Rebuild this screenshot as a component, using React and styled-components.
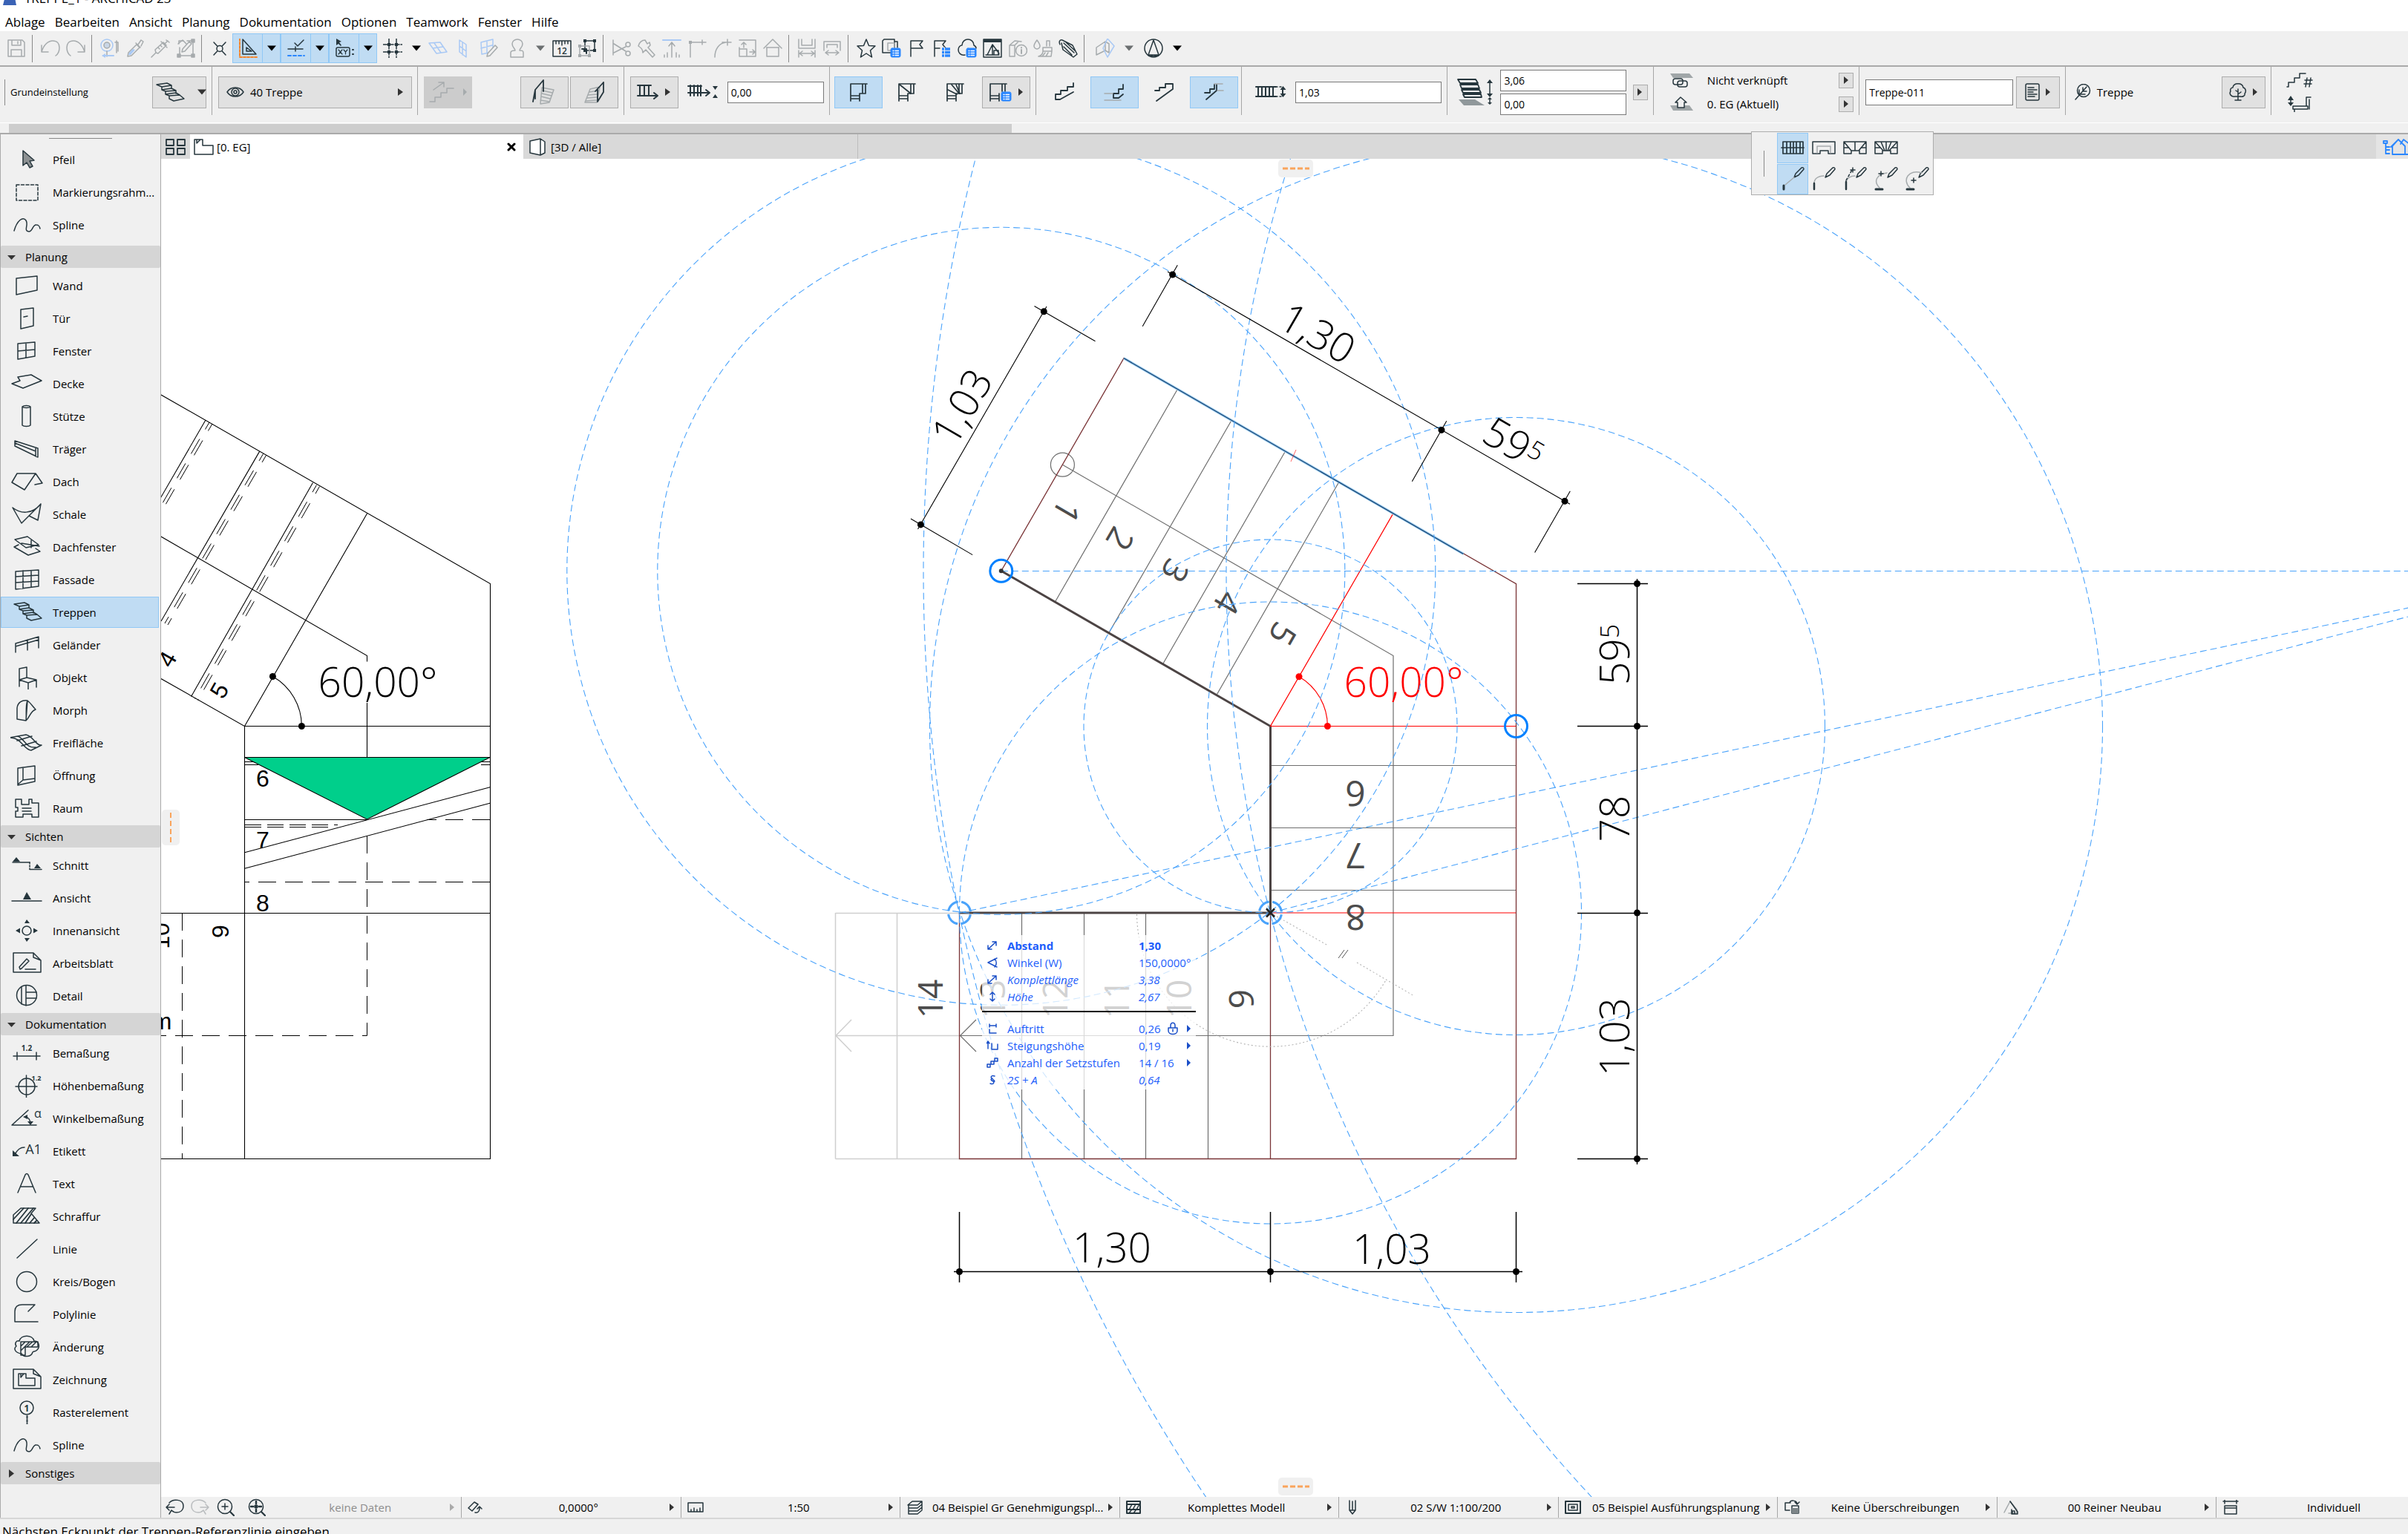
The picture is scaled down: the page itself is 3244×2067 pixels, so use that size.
import React from "react";
import styled, { createGlobalStyle, css } from "styled-components";

const ink = "#26363d";
const mute = "#a6abad";
const blue = "#2b87ff";
const pale = "#a9c9f5";
const guide = "#4aa3fb";

const Global = createGlobalStyle`
  * { box-sizing: border-box; }
  body { margin: 0; background: #f0f0f0; color: #000; font-family: "Open Sans", "Noto Sans", sans-serif; font-size: 15px; overflow: hidden; }
  button, input { font: inherit; color: inherit; }
  button { border: 0; background: none; padding: 0; }
  svg { display: block; flex: none; }
`;

/* ---------- icons ---------- */

const P = ({ d, c, f = "none", w }) => <path d={d} stroke={c} fill={f} strokeWidth={w} />;
const S = ({ d, c = "currentColor" }) => <path d={d} fill={c} stroke="none" />;

const Svg = ({ w = 26, h = 26, children, color = ink, line = 1.5 }) => (
  <svg width={w} height={h} viewBox={`0 0 ${w} ${h}`} color={color} stroke={color} fill="none"
    strokeWidth={line} strokeLinecap="round" strokeLinejoin="round" aria-hidden="true">
    {children}
  </svg>
);

const Down = ({ c = "#000" }) => <Svg w={12} h={8} color={c}><S d="M0 0.500h12l-6 7z" c={c} /></Svg>;
const Right = ({ c = "#333", s = 8 }) => <Svg w={s} h={12} color={c}><S d={`M0 1l${s - 1} 5l${1 - s} 5z`} c={c} /></Svg>;
const ListBadge = ({ x, y }) => (
  <g transform={`translate(${x} ${y})`}>
    <rect width="13" height="12" rx="2" fill={blue} stroke={blue} strokeWidth="1" />
    <path d="M3 3.500h1M6 3.500h4.500M3 6.500h1M6 6.500h4.500M3 9.500h1M6 9.500h4.500" stroke="#fff" strokeWidth="1.300" />
  </g>
);

const tool = {
  save: <Svg color={mute}><P d="M2 2h19l3 3v19H2zM7 2v7h12V2M6 24v-9h14v9M15 4v3" /></Svg>,
  undo: <Svg color={mute}><P d="M1 9v9h9M1 18C4 8 10 3 16 3c6 0 9 4 9 9s-2 9-5 11" /></Svg>,
  redo: <Svg color={mute}><P d="M25 9v9h-9M25 18C22 8 16 3 10 3c-6 0-9 4-9 9s2 9 5 11" /></Svg>,
  find: <Svg color={mute}><circle cx="9" cy="9" r="8" stroke={pale} /><circle cx="9" cy="9" r="4" fill="#c9d6e6" /><P d="M9 17v7M20 5h4v12M22 3v16" /><P d="M4 23h14" c={pale} w={2} /><S d="M2 23l5-3v6z" c={pale} /></Svg>,
  pick: <Svg color={mute}><P d="M3 24l1-5L15 8l4 4L8 23zM14 6l6 6M17 8l4-6 3 2-3 6" /><S d="M5 19l5-5 3 1-6 7H4z" c={pale} /></Svg>,
  inject: <Svg color={mute}><P d="M1 25l6-6M7 19l-1-4L17 5l4 4L10 20zM14 4l8 8M19 7l4-4M21 2l4 3M10 12l2 2M13 9l2 2" /></Svg>,
  edit: <Svg color={mute}><P d="M4 7V3h6M15 3h8v20H5V12M9 14L18 4l3 3-9 10-4 1z" /><P d="M3 7l6-5 5 5" /><rect x="21" y="1" width="4" height="4" fill={mute} /><rect x="21" y="21" width="4" height="4" fill={mute} /><rect x="2" y="21" width="4" height="4" fill={mute} /></Svg>,
  cross: <Svg><P d="M5 5l16 17M21 5L5 22" /><circle cx="13" cy="13.500" r="4" fill="#f0f0f0" /></Svg>,
  square: <Svg><P d="M6 1v20h18zM11 12v5h7z" /><path d="M2 0v25h24" stroke="#f5842a" strokeWidth="2" strokeDasharray="3 2" /></Svg>,
  snap: <Svg><P d="M2 14h20M12 11v6M11 6l4 4 8-8" /><path d="M2 23h22" stroke={blue} strokeWidth="2" strokeDasharray="4 3" /></Svg>,
  coord: <Svg><S d="M2 0v9l3-2 3 3 1-1-3-4 3-1z" /><rect x="2" y="12" width="18" height="12" rx="2" /><P d="M5 15l5 6M10 15l-5 6M12 15l2.500 3L17 15M14.500 18v3" w={1.200} /><P d="M24 15h1M24 21h1" w={2} /></Svg>,
  grid: <Svg><path d="M0 8h26M0 18h26M8 0v26M18 0v26" strokeDasharray="6 2" /><S d="M6 6h4v4H6zM16 6h4v4h-4zM6 16h4v4H6zM16 16h4v4h-4z" /></Svg>,
  plane: <Svg color={pale}><P d="M1 6l15-1 9 13-14 2zM6 13l14-2M8 6l9 13M15 5" /></Svg>,
  wallp: <Svg color={pale}><P d="M8 2l9 6v17l-9-7zM8 10l9 7M12 5v17" /></Svg>,
  planeEdit: <Svg color={pale}><P d="M3 5l16-4v17L4 21zM3 13l15-4M11 3v17" /><P d="M11 24l1-4 10-11 3 3-10 11z" c={mute} f="#f0f0f0" /></Svg>,
  stamp: <Svg color={mute}><P d="M5 25h17v-6c0-3-2-3-5-3 0-3 4-4 4-9a7 6 0 0 0-14 0c0 5 4 6 4 9-3 0-6 0-6 3z" /></Svg>,
  ruler: <Svg><P d="M1 3h24v21H1zM5 3v4M9 3v4M13 3v6M17 3v4M21 3v4" /><text x="13" y="21" fontSize="12" fontWeight="600" textAnchor="middle" fill={ink} stroke="none">12</text></Svg>,
  group: <Svg><P d="M10 3h13v13H10z" /><P d="M3 10h13v13H3z" c={mute} /><S d="M8 1h4v4H8zM21 1h4v4h-4zM8 14h4v4H8zM21 14h4v4h-4z" /><P d="M6 14h6v6" w={2} /><S d="M1 8h4v4H1zM1 21h4v4H1zM14 21h4v4h-4z" c={mute} /></Svg>,
  scissors: <Svg color={mute}><P d="M2 2v20M3 7l16 10M3 19l16-8" /><circle cx="22" cy="8" r="3" /><circle cx="22" cy="20" r="3" /></Svg>,
  axe: <Svg color={mute}><P d="M2 10c1-5 5-8 9-8l3 5 3-2 1 4-3 3 9 10-3 3-9-10-4 4c0-5-3-7-6-9z" /></Svg>,
  raise: <Svg color={mute}><P d="M1 2h24" c={pale} w={2} /><P d="M13 25V5M9 10l4-5 4 5M7 25v-6M3 25v-3M19 25v-6M23 25v-3" /></Svg>,
  corner: <Svg color={mute}><P d="M4 25V5h14M18 5h7M20 2v6" /><S d="M2 3h4v4H2z" c={mute} /></Svg>,
  fillet: <Svg color={mute}><P d="M3 25C3 14 9 6 18 5M13 5h12M20 1v8" /></Svg>,
  resize: <Svg color={mute}><P d="M2 2h22v22H13M2 24V12M2 24h10V14H2M8 12V6M5 8l3-3 3 3M16 18h6M20 15l3 3-3 3" /></Svg>,
  house: <Svg color={mute}><P d="M1 13L13 1l12 12M5 12v12h16V12" /><P d="M5 12h16" /></Svg>,
  gapW: <Svg color={mute}><P d="M2 1v12h22V1M6 1v8h14V1M2 16v9M24 16v9M4 20h18M7 17l-4 3 4 3M19 17l4 3-4 3" /></Svg>,
  gapD: <Svg color={mute}><P d="M2 12V4h22v8M6 12V8h14v4M4 19h18M8 16l-4 3 4 3M18 16l4 3-4 3M2 12v4M24 12v4" /></Svg>,
  star: <Svg><P d="M13 1l3.500 8.500 8.500.500-6.500 6 2 9L13 20l-7.500 5 2-9L1 10l8.500-.500z" /></Svg>,
  copyl: <Svg><P d="M3 1h14v18H1V3zM17 4h4v8" /><P d="M8 6h9v10H8z" c={mute} /><ListBadge x={12} y={13} /></Svg>,
  flag: <Svg><P d="M5 24V3h16l-4 5 4 5H5" /></Svg>,
  flagl: <Svg><P d="M3 24V3h15l-4 5 4 5M3 13h7" /><path d="M13 14h11M13 18.500h11M13 23h11" stroke={blue} strokeWidth="3.500" strokeLinecap="butt" /><path d="M16.500 12v13" stroke="#f0f0f0" strokeWidth="1" /></Svg>,
  cloud: <Svg><P d="M10 22c-6 1-9-3-9-7s3-6 5-6c0-5 4-8 8-8s8 3 8 8c2 1 3 2 3 4" /><ListBadge x={12} y={13} /></Svg>,
  view: <Svg><P d="M1 1h24v24H1z" /><S d="M1 1h24v4H1z" /><P d="M6 22L13 8l9 12M13 8v14M15 22v-6h6v6M4 22h18" /></Svg>,
  info: <Svg color={mute}><P d="M9 24H2V9l7-6 9 1M2 9h7v15M9 9l5-5" /><circle cx="18" cy="16" r="7.500" fill="#f0f0f0" /><P d="M18 12v.500M18 15v5" w={2} /></Svg>,
  brush: <Svg color={mute}><P d="M5 2c3 4 4 6 4 8s-2 4-4 4-4-2-4-4 1-4 4-8zM18 10V3h4v7M13 12h12v5H13zM13 17c0 4-3 6-6 7h17l1-7M12 24l4-5M17 24l3-5" /></Svg>,
  clip: <Svg><P d="M2 8c-2-4 0-7 3-6l14 7 6 12-5 4L6 15 4 6M7 6l14 13M10 5l13 12M7 11l11 11" /></Svg>,
  cube: <Svg color={mute}><P d="M1 12l12-8v12L1 22zM13 4l5 3v12l-5-3" /><P d="M16 0l9 10-9 15-6-12z" c={pale} /></Svg>,
  compass: <Svg><ellipse cx="13" cy="13" rx="12" ry="12" /><P d="M13 2L6 22h14zM6 22c4 2 10 2 14 0" /></Svg>,
};

const pal = {
  pfeil: <><path d="M17 4l15 13-6 1 4 7-4 2-4-7-5 4z" fill="#8d9193" /></>,
  rahmen: <rect x="8" y="6" width="29" height="21" strokeDasharray="4 2.500" />,
  spline: <P d="M5 24C9 10 17 4 21 10s-4 14 4 15c5 0 5-10 10-9 3 0 4 1 5 5" />,
  wand: <P d="M8 6l28-3v19L8 28zM8 6v22" />,
  tuer: <P d="M14 4l17-2v24l-17 4zM18 14l5-1" />,
  fenster: <P d="M10 6l23-2v19L10 27zM21 5v20M10 16l23-2" />,
  decke: <P d="M10 7l18-3 14 8-25 10-15-6 11-4z" />,
  stuetze: <P d="M16 3v25c2 2 9 2 11 0V3M16 3c2-2 9-2 11 0-2 2-9 2-11 0" />,
  traeger: <P d="M6 5l31 10v12L6 12zM6 8l28 11M34 14v12" />,
  dach: <P d="M9 5h25l9 13-10 2M9 5L2 17l17 10L34 5M34 5l-15 22" />,
  schale: <P d="M3 7c10 8 26 10 38-5l-4 22-12-6M3 7l12 21L41 2" />,
  dachf: <P d="M6 6l17-4 15 11-17 4zM11 13l-6 3 19 11 16-5-6-4M15 11l24 4M28 7v10" />,
  fassade: <P d="M7 5l31-2v22L7 29zM17 4v24M28 4v22M7 12l31-2M7 20l31-2" />,
  treppen: <P d="M5 5l14-2 6 3-13 2zM12 8v4l5 2M12 8l13-2v4M17 14l-5-2 13-2 6 3zM17 14v4l5 2M31 13v4M22 20l-5-2 14-2 5 3zM22 20v4l6 3 14-3-6-5" />,
  gelaender: <P d="M7 14l31-9v9M7 14v12M7 18l31-9M23 9v14M38 14v6" />,
  objekt: <P d="M12 4l10-2v14l-10 3zM12 19l12 4 11-4-13-3M12 19v9M24 23v9M35 19v10" />,
  morph: <P d="M9 28V13C10 5 16 2 23 3l-2 27zM23 3c4 3 8 9 11 12-7 2-8 11-13 15M23 3c-3 6-1 20-2 27" />,
  frei: <P d="M-1 9l22-4c9 1 13 15 21 14l-14 7C18 26 15 8-1 9zM10 7c9 3 10 16 24 15M9 13l20-6M15 20l20-6" />,
  oeffnung: <P d="M10 6l23-3v21l-23 5zM17 5v17M10 28l7-6 16-2" />,
  raum: <P d="M7 4h8v7h10V4h4v5h9v19h-9v-4H17v4H7v-8h3v-5H7zM16 16h12M16 20h12" />,
  schnitt: <><P d="M3 12h23M26 21.500h16" /><path d="M26 12v9" strokeDasharray="2 2" /><S d="M3 11l5-6 5 6zM32 20l4-6 5 6z" /></>,
  ansicht: <><P d="M2 20h40" /><S d="M17 18l5-10 6 10z" /></>,
  innen: <><circle cx="22" cy="16" r="6" /><S d="M19 6l3-5 4 5zM19 26l3 5 4-5zM13 12.500v7l-6-3.500zM31 12.500v7l6-3.500z" /></>,
  blatt: <P d="M6 2h25l10 10v16H4V2zM31 2v6l10 4M13 24l-1-3 10-11 3 3-10 10zM20 24h14" />,
  detail: <><circle cx="22" cy="15" r="13.500" /><P d="M15 4v23M21 2v27M35 11H21M35 19H21" /></>,
  bemass: <><P d="M4 20h36M9 15v10M35 15v10" /><text x="22" y="13" fontSize="10" fontWeight="700" textAnchor="middle" fill={ink} stroke="none">1.2</text></>,
  hoehen: <><circle cx="22" cy="17" r="11" /><P d="M7 17h29M21.500 2v30" /><text x="35" y="9" fontSize="9" fontWeight="700" textAnchor="middle" fill={ink} stroke="none">1.2</text></>,
  winkel: <><P d="M2 25h33M2 25L24 5M20 14c4 0 7 4 7 9" /><S d="M17 14l6-3v6zM23 20h8l-4 5z" /><text x="37" y="15" fontSize="16" textAnchor="middle" fill={ink} stroke="none">α</text></>,
  etikett: <><P d="M6 20c4-6 7-9 13-9" /><S d="M3 15l9 8H3z" /><text x="31" y="20" fontSize="18" textAnchor="middle" fill={ink} stroke="none">A1</text></>,
  text: <P d="M10 28L20 4q2-3 4 0l10 24M14 20h16" />,
  schraff: <><P d="M4 14L14 5h20l-6 7 11 13H4z" /><P d="M4 20L18 5M8 25L24 5M14 25L31 5M20 25l8-12M26 25l6-7M32 25l3-3" w={1.800} /></>,
  linie: <P d="M9 28L36 3" />,
  kreis: <circle cx="22" cy="16" r="13.500" />,
  poly: <P d="M37 26H6V12c0-6 4-9 10-9h17l-9 9" />,
  aender: <><P d="M12 8c2-9 18-9 20 0 7 0 8 8 4 12-3 3-5 1-6 3-2 7-12 7-15 2C6 24 4 18 8 15c-3-4 0-8 4-7z" /><P d="M14 9h23v7H20v11h-6zM14 15l6-6M14 21l12-12M22 16l8-7M28 16l7-7" /></>,
  zeich: <P d="M6 2h25l10 10v16H4V2zM31 2v6l10 4M11 8h10v6h12v10H11zM14 8v5l4-5" />,
  raster: <><circle cx="22" cy="10" r="9" /><path d="M22.500 21v11" strokeDasharray="3 2" strokeWidth="2" /><text x="22" y="14.500" fontSize="12" fontWeight="700" textAnchor="middle" fill={ink} stroke="none">1</text></>,
};

/* ---------- shell ---------- */

const Shell = styled.div`
  display: flex; flex-direction: column; height: 100vh; overflow: hidden;
`;
const TitleBar = styled.header`
  display: flex; gap: 11px; height: 30px; margin-top: -13px; padding-left: 4px; background: #fff; font-size: 17px; line-height: 22px;
`;
const MenuBar = styled.nav`
  display: flex; gap: 13px; height: 25px; padding-left: 7px; background: #fff; font-size: 17px; line-height: 24px;
`;
const Toolbar = styled.div`
  display: flex; align-items: center; height: 48px; padding-left: 5px; border-bottom: 2px solid #aaa;
`;
const ToolBtn = styled.button`
  display: flex; align-items: center; justify-content: center; width: 34px; height: 40px;
`;
const SplitBox = styled.div`
  display: grid; grid-template-columns: 1fr 24px; width: 65px; height: 40px; flex: none;
  ${(p) => p.$on && css`
    background: #c0dcf3; border: 1px solid #90c8f6;
    & > * + * { border-left: 1px solid #90c8f6; }
  `}
`;
const SplitBtn = styled.button`
  display: flex; align-items: center; justify-content: center;
`;
const ToolSep = styled.span`
  width: 1px; height: 37px; margin: 0 7px 0 4px; background: #8a8a8a; flex: none;
`;
const Split = ({ on, icon, muted, label }) => (
  <SplitBox $on={on}>
    <SplitBtn aria-label={label}>{icon}</SplitBtn>
    <SplitBtn aria-label={label + " Optionen"}><Down c={muted ? "#6b6f70" : "#000"} /></SplitBtn>
  </SplitBox>
);

/* ---------- info box ---------- */

const InfoBar = styled.div`
  display: grid; grid-template-columns: 285px repeat(10, 3fr) 2fr; height: 75px; padding-bottom: 10px;
`;
const Panel = styled.section`
  display: flex; align-items: center; gap: ${(p) => p.$gap ?? 2}px; padding: 3px 7px 0 ${(p) => p.$pl ?? 8}px; min-width: 0;
  font-size: 15px;
  & + & { border-left: 1px solid #a6a6a6; }
`;
const Box = styled.button`
  display: flex; align-items: center; justify-content: ${(p) => p.$justify ?? "center"}; gap: 8px; flex: ${(p) => (p.$grow ? 1 : "none")};
  width: ${(p) => p.$w ?? 65}px; height: 43px; padding: 0 ${(p) => (p.$grow ? 10 : 6)}px;
  background: #e1e1e1; border: 1px solid #adadad;
  ${(p) => p.$kind === "on" && css`background: #c0dcf3; border-color: #90c8f6;`}
  ${(p) => p.$kind === "off" && css`background: #ccc; border-color: #ccc;`}
  ${(p) => p.$kind === "plain" && css`background: none; border-color: transparent;`}
`;
const MiniBtn = styled.button`
  display: flex; align-items: center; justify-content: center; width: 20px; height: 21px; background: #e1e1e1; border: 1px solid #adadad; flex: none;
`;
const Grow = styled.span`flex: 1; text-align: left; white-space: nowrap;`;
const Field = styled.input`
  flex: 1; min-width: 0; height: ${(p) => p.$h ?? 29}px; padding: 0 4px; background: #fff; border: 1px solid #7a7a7a; border-radius: 0; font-size: 14px;
`;
const Stack = styled.div`
  display: flex; flex-direction: column; gap: 3px; flex: 1; min-width: 0;
  ${Field} { flex: none; width: 100%; }
`;
const Line = styled.div`
  display: flex; align-items: center; gap: 18px; height: 29px;
`;
const Grip = styled.span`width: 1px; height: 35px; background: #8a8a8a;`;
const BoxDivider = styled.span`width: 1px; height: 37px; background: #aaa;`;
const GroupLabel = styled.span`flex: 1; padding-left: 5px; font-size: 13px; white-space: nowrap;`;
const ScrollTrack = styled.div`
  height: 16px; padding: 1px 0 2px 12px; border-top: 1px solid #fff; border-bottom: 2px solid #aaa;
`;
const ScrollThumb = styled.div`width: 41.8%; height: 12px; background: #cdcdcd;`;

/* ---------- work area ---------- */

const Work = styled.main`
  display: grid; grid-template-columns: 217px 1fr; flex: 1; min-height: 0;
`;
const Palette = styled.aside`
  border-left: 1px solid #aaa; border-right: 1px solid #aaa; padding-top: 5px; min-height: 0; overflow: hidden;
`;
const PaletteGrip = styled.div`width: 85px; height: 1px; margin: 0 0 6px 65px; background: #888;`;
const PaletteHead = styled.button`
  display: flex; align-items: center; gap: 13px; width: 100%; height: 30px; padding-left: 9px; background: #d5d5d5; font-size: 15px; border-radius: 2px;
`;
const PaletteList = styled.ul`
  list-style: none; margin: 0; padding: ${(p) => (p.$first ? "0 0 6px" : "2px 0 1px")};
  li { padding: 1px 0; }
`;
const PaletteRow = styled.button`
  display: flex; align-items: center; gap: 13px; width: 213px; height: 42px; padding-left: 12px; border: 1px solid transparent;
  ${(p) => p.$on && css`background: #c0dcf3; border-color: #90c8f6;`}
`;
const Content = styled.div`display: flex; flex-direction: column; min-width: 0; min-height: 0;`;
const Tabs = styled.div`
  display: flex; height: 33px; background: #d9d9d9; flex: none;
`;
const Tab = styled.div`
  display: flex; align-items: center; width: 450px; padding: 0 10px 0 5px; background: ${(p) => (p.$on ? "#fff" : "#d9d9d9")}; border-right: 1px solid ${(p) => (p.$on ? "#d9d9d9" : "#bdbdbd")};
`;
const TabName = styled.button`
  display: flex; align-items: center; gap: 3px; flex: 1;
`;
const TabGrid = styled.button`display: flex; align-items: center; justify-content: center; width: 39px;`;
const TabEnd = styled.button`
  display: flex; align-items: center; width: 43px; margin-left: auto; padding-left: 9px; background: #e4e4e4; overflow: hidden;
`;
const Canvas = styled.div`
  position: relative; flex: 1; min-height: 0; background: #fff; overflow: hidden;
  & > svg { width: 100%; height: 100%; }
`;
const Ear = styled.div`
  position: absolute; display: flex; align-items: center; justify-content: center; background: #f0f0f0; border-radius: 5px;
  width: ${(p) => (p.$v ? 24 : 47)}px; height: ${(p) => (p.$v ? 48 : 24)}px;
  ${(p) => p.$side === "left" && css`left: 1px; top: 877px;`}
  ${(p) => p.$side === "top" && css`left: 1505px; top: 1px;`}
  ${(p) => p.$side === "bottom" && css`left: 1505px; bottom: 2px;`}
`;
const Tracker = styled.dl`
  position: absolute; left: 1106px; top: 1046px; width: 288px; height: 208px; margin: 0; padding: 2px 0;
  background: rgba(255, 255, 255, 0.75); color: #1c5dfb; font-size: 15px;
`;
const TrackRow = styled.div`
  display: grid; grid-template-columns: 28px 177px 38px 1fr 12px; align-items: center; height: 23px; padding-left: 6px;
  font-weight: ${(p) => (p.$bold ? 700 : 400)}; font-style: ${(p) => (p.$it ? "italic" : "normal")}; white-space: nowrap;
  dd { margin: 0; }
`;
const TrackRule = styled.hr`margin: 8px 0 10px; border: 0; height: 2px; background: #000;`;

const FloatBox = styled.div`
  position: absolute; z-index: 2; right: 639px; top: 177px; display: flex; align-items: center; gap: 17px; width: 246px; height: 86px; padding: 0 0 0 16px;
  background: #f0f0f0; border: 1px solid #adadad;
`;
const FloatGrid = styled.div`display: grid; grid-template-columns: repeat(5, 42px); grid-auto-rows: 41px; row-gap: 1px;`;
const FloatBtn = styled.button`
  display: flex; align-items: center; justify-content: center; border: 1px solid transparent;
  ${(p) => p.$on && css`background: #c0dcf3; border-color: #90c8f6;`}
`;

const StatusBar = styled.footer`
  display: grid; grid-template-columns: 109px repeat(9, minmax(0, 8fr)) minmax(0, 7fr); height: 28px; flex: none; font-size: 15px;
`;
const StatusCell = styled.div`
  display: flex; align-items: center; overflow: hidden; padding: 0 8px;
  & + & { border-left: 1px solid #a6a6a6; }
`;
const StatusBtn = styled.button`
  display: flex; align-items: center; flex: none; width: 100%; min-width: 278px; color: ${(p) => (p.$off ? "#8d8d8d" : "#000")};
`;
const StatusLabel = styled.span`flex: 1; text-align: center; white-space: nowrap; padding-left: 6px;`;
const ZoomSet = styled.div`display: flex; align-items: center; justify-content: space-around; padding: 0 6px 0 0;`;
const Message = styled.div`
  height: 22px; padding: 5px 0 0 3px; border-top: 2px solid #d6d6d6; font-size: 17px; line-height: 24px; white-space: nowrap; overflow: hidden; flex: none;
`;

/* ---------- drawing ---------- */

const Num = ({ x, y, r = 0, s = 55, c = "#000", w = 300, f, children }) => (
  <text transform={`translate(${x} ${y}) rotate(${r})`} y={s * 0.357} fontSize={s} fontWeight={w} fill={c}
    stroke="none" textAnchor="middle" fontFamily={f}>{children}</text>
);
const Sup = () => <tspan fontSize="34" dy="-14">5</tspan>;
const Dot = ({ x, y, c = "#000" }) => <circle cx={x} cy={y} r="4.500" fill={c} stroke="none" />;

const hatch = [[277, 566, 170, 751], [349.600, 608.400, 217, 837], [421.400, 650.600, 257.600, 938.400]];

const Drawing = () => (
  <svg fill="none" fontFamily='"Open Sans", "Noto Sans", sans-serif' role="img" aria-label="Grundriss der Treppe">
    <g transform="translate(-217 -214)">
      {/* finished stair on the left */}
      <g stroke="#000" strokeWidth="1.100">
        <path d="M217 532L660.500 786.500V1561.500H217M217 914.500L329.500 978.500V1561.500M329.500 978.500H660M329.500 1020.500H660M217 723L494.500 883.500v8M494.500 947v73M329.500 978.500L494.500 692M217 1230.500H660" />
        {hatch.map(([a, b, c, d]) => (
          <g key={a}>
            <path d={`M${a} ${b}L${c} ${d}`} />
            <path d={`M${a + 5} ${b + 3}L${c + 5} ${d + 3}M${a + 9} ${b + 5}L${c + 9} ${d + 5}`} strokeWidth="1" strokeDasharray="23 15" strokeDashoffset="12" />
          </g>
        ))}
        <path d="M330 1104.500H494M330 1026.500h18M330 1030.500h18M648 1026.500h12M648 1030.500h12M329.500 1148.700L660 1060.800M329.500 1170.300L660 1082.300" />
        <path d="M330 1111.500H455M330 1114.500H450" strokeDasharray="22 8" strokeWidth="1" />
        <path d="M660 1104.500H575M660 1188.500H330M494.500 1126V1395.500H217M245.500 1230V1561" strokeDasharray="24 12" strokeWidth="1" />
        <path d="M329.500 1020.500H660L494.500 1104z" fill="#00cf8b" />
        <path d="M367.400 911.500A77 77 0 0 1 406.400 978.500" />
      </g>
      <Dot x={367.400} y={911.500} /><Dot x={406.400} y={978.500} />
      <Num x={509} y={919}>60,00°</Num>
      <g fontFamily='"Liberation Sans", Arial, sans-serif'>
        <Num x={354} y={1049} s={32} w={400}>6</Num>
        <Num x={354} y={1132} s={32} w={400}>7</Num>
        <Num x={354} y={1217} s={32} w={400}>8</Num>
        <Num x={297} y={1255} s={32} w={400} r={-90}>9</Num>
        <Num x={217} y={1261} s={32} w={400} r={-90}>10</Num>
        <Num x={225} y={888} s={32} w={400} r={-60}>4</Num>
        <Num x={295} y={930} s={32} w={400} r={-60}>5</Num>
        <Num x={218} y={1376} s={32} w={400}>m</Num>
      </g>

      {/* ghost continuation */}
      <path d="M1125.500 1230.500H1292M1125.500 1561.500H1292M1125.500 1230V1561.500M1208.500 1230V1561.500M1125.500 1395.500H1292M1147 1374L1126 1395.500L1147 1417" stroke="#cfcfcf" strokeWidth="1.500" />

      {/* stair being drawn */}
      <g stroke="#6e6e6e" strokeWidth="1.200">
        <path d="M1586 525L1422 810M1659 566.500L1494 852.500M1731 609L1567 894M1803.500 650L1639.500 935.500" />
        <path d="M1711 1031.500H2042M1711 1115.500H2042M1711 1199.500H2042M1376.500 1230V1561M1460.500 1230V1561M1543.500 1230V1561M1627.500 1230V1561" />
        <path d="M1431.400 626.200L1877 883.500V1395.500H1293M1315 1374L1293.500 1395.500L1315 1417" />
        <circle cx="1431.400" cy="626.200" r="16" />
      </g>
      <path d="M1348.800 769.300L1514 482.700L2042.500 786.700V1561.500H1292.500V1230M1711.500 1230V1561.500" stroke="#7a3436" strokeWidth="1.300" />
      <path d="M1514 482.700L1971.400 746.300" stroke="#a9d4f7" strokeWidth="3.500" />
      <path d="M1514 482.700L1971.400 746.300" stroke="#1d4f7c" strokeWidth="1.400" />
      <path d="M1348.800 769.300L1711.500 978.500V1230H1292.500" stroke="#4c4444" strokeWidth="3" />
      <g stroke="#f00" strokeWidth="1.200">
        <path d="M1876 693.400L1711.500 978.500H2042M1711.500 1230H2042M1750 911.700A77 77 0 0 1 1788.400 978.500" />
        <path d="M1746 606L1739 622" strokeWidth="1" opacity="0.600" />
      </g>
      <Dot x={1750} y={911.700} c="#f00" /><Dot x={1788.400} y={978.500} c="#f00" />
      <Num x={1891} y={919} c="#f00">60,00°</Num>

      <g stroke="#b4b4b4" strokeWidth="1.100" strokeDasharray="2 3">
        <path d="M1531.500 1232A180 180 0 0 0 1867.500 1320M1711.500 1230L1789 1274M1828 1297L1905 1342" />
      </g>
      <path d="M1803 1291l8-11M1808 1291l8-11" stroke="#555" />

      {/* step numbers */}
      {[["1", 1437, 689], ["2", 1509, 726], ["3", 1583, 769], ["4", 1654, 812], ["5", 1728, 854]].map(([t, x, y]) => (
        <Num key={t} x={x} y={y} r={120} s={46} w={400} c="#4c4c4c">{t}</Num>
      ))}
      {[["6", 1069], ["7", 1153], ["8", 1236]].map(([t, y]) => (
        <Num key={t} x={1826} y={y} r={180} s={48} w={400} c="#4c4c4c">{t}</Num>
      ))}
      {[["9", 1673], ["10", 1589], ["11", 1505], ["12", 1422], ["13", 1338], ["14", 1254]].map(([t, x]) => (
        <Num key={t} x={x} y={1346} r={-90} s={46} w={400} c="#4c4c4c">{t}</Num>
      ))}

      {/* construction guides */}
      <g stroke={guide} strokeWidth="1.100" strokeDasharray="9 5">
        <circle cx="2042.500" cy="978.500" r="790" />
        <circle cx="2042.500" cy="978.500" r="416" />
        <circle cx="1348.800" cy="769.300" r="463" />
        <circle cx="1348.800" cy="769.300" r="585" />
        <circle cx="1711.500" cy="1230" r="419" />
        <circle cx="1711.500" cy="978.500" r="251.500" />
        <circle cx="3480" cy="769.300" r="2236" />
        <circle cx="3480" cy="769.300" r="1828" />
        <path d="M1348.800 769.500H3480M1292.500 1230L3480 769.500M1711.500 1230L3480 769.500" />
      </g>
      <g strokeWidth="3">
        <circle cx="1348.800" cy="769.300" r="15" stroke="#0080ff" />
        <circle cx="2042.500" cy="978.500" r="15" stroke="#0080ff" />
        <circle cx="1292.500" cy="1230" r="15" stroke={guide} strokeDasharray="19 4.560" strokeDashoffset="-2.300" />
        <circle cx="1711.500" cy="1230" r="15" stroke={guide} strokeDasharray="19 4.560" strokeDashoffset="-2.300" />
      </g>
      <circle cx="1348.800" cy="769.300" r="3" fill="#333" />
      <path d="M1706 1224.500l11 11M1717 1224.500l-11 11" stroke="#222" strokeWidth="2.500" />

      {/* dimension chains */}
      <g stroke="#000" strokeWidth="1.100">
        <path d="M1573 366L1579.600 370L2108 675.200l7 4M1586.300 357.300L1539.200 439.700M1948.800 567.200L1902.300 648.800M2115.300 661.800L2067.600 744.600" />
        <path d="M1410 413L1236.500 713M1393.500 412.400L1475.500 459.700M1227 699L1310.200 747.600" />
        <path d="M2205.500 780V1569M2125 786.500h95M2125 978.500h95M2125 1230.500h95M2125 1561.500h95" strokeWidth="1.500" />
        <path d="M1285 1713.500H2051M1292.500 1633v95M1711.500 1633v95M2042.500 1633v95" strokeWidth="1.500" />
      </g>
      {[[1579.600, 370], [1942, 579.400], [2108, 675.200], [1406.300, 419.800], [1240.400, 706.900], [2205.500, 786.500], [2205.500, 978.500], [2205.500, 1230], [2205.500, 1561.500], [1292.500, 1713.500], [1711.500, 1713.500], [2042.500, 1713.500]].map(([x, y]) => <Dot key={x + "/" + y} x={x} y={y} />)}
      <Num x={1775} y={449} r={30}>1,30</Num>
      <Num x={2039} y={597} r={30}>59<Sup /></Num>
      <Num x={1296} y={548} r={-60}>1,03</Num>
      <Num x={2175} y={882} r={-90}>59<Sup /></Num>
      <Num x={2175} y={1103} r={-90}>78</Num>
      <Num x={2175} y={1397} r={-90}>1,03</Num>
      <Num x={1498} y={1681}>1,30</Num>
      <Num x={1875} y={1683}>1,03</Num>
    </g>
  </svg>
);

/* ---------- data ---------- */

const menus = ["Ablage", "Bearbeiten", "Ansicht", "Planung", "Dokumentation", "Optionen", "Teamwork", "Fenster", "Hilfe"];
const groups = [
  { items: [["Pfeil", "pfeil"], ["Markierungsrahm...", "rahmen"], ["Spline", "spline"]] },
  { head: "Planung", items: [["Wand", "wand"], ["Tür", "tuer"], ["Fenster", "fenster"], ["Decke", "decke"], ["Stütze", "stuetze"], ["Träger", "traeger"], ["Dach", "dach"], ["Schale", "schale"], ["Dachfenster", "dachf"], ["Fassade", "fassade"], ["Treppen", "treppen"], ["Geländer", "gelaender"], ["Objekt", "objekt"], ["Morph", "morph"], ["Freifläche", "frei"], ["Öffnung", "oeffnung"], ["Raum", "raum"]] },
  { head: "Sichten", items: [["Schnitt", "schnitt"], ["Ansicht", "ansicht"], ["Innenansicht", "innen"], ["Arbeitsblatt", "blatt"], ["Detail", "detail"]] },
  { head: "Dokumentation", items: [["Bemaßung", "bemass"], ["Höhenbemaßung", "hoehen"], ["Winkelbemaßung", "winkel"], ["Etikett", "etikett"], ["Text", "text"], ["Schraffur", "schraff"], ["Linie", "linie"], ["Kreis/Bogen", "kreis"], ["Polylinie", "poly"], ["Änderung", "aender"], ["Zeichnung", "zeich"], ["Rasterelement", "raster"], ["Spline", "spline"]] },
];

const magnify = (extra, c = ink) => <Svg w={24} h={24} color={c}><circle cx="11" cy="11" r="9.500" /><P d="M18 18l5 5" w={2.200} />{extra}</Svg>;
const orbit = (flip, c = ink) => (
  <Svg w={26} h={22} color={c}>
    <g transform={flip ? "translate(26 0) scale(-1 1)" : undefined}><P d="M6 5C11-1 25 0 25 9c0 6-4 9-9 9-3 0-5-1-7-3M2 11h11M6 7l-4 4 4 4M9 15l-3 5" /></g>
  </Svg>
);
const statusItems = [
  ["keine Daten", magnify(<><circle cx="11" cy="11" r="2" fill={ink} /><P d="M11 4v3M11 15v3M4 11h3M15 11h3" w={2.500} /></>), true],
  ["0,0000°", <Svg w={20} h={20} key="i"><P d="M1 11L9 3l5 3-8 9zM10 17c4 1 6-2 6-6M13 12l3-3 3 3" /></Svg>],
  ["1:50", <Svg w={22} h={16} key="i"><P d="M1 2h20v12H1zM5 14v-3M9 14v-5M13 14v-3M17 14v-5" /></Svg>],
  ["04 Beispiel Gr Genehmigungspl...", <Svg w={22} h={20} key="i"><P d="M8 2h13l-6 5H2zM3 11h12l6-5M3 15h12l6-5M3 19h12l6-5M3 7v12M21 2v11" /></Svg>],
  ["Komplettes Modell", <Svg w={20} h={18} key="i"><P d="M1 1h18v16H1zM1 5h18M1 12h18" w={2} /><P d="M4 12l4-7M9 12l4-7M14 12l4-7M4 17l3-4M10 17l3-4" /></Svg>],
  ["02 S/W 1:100/200", <Svg w={20} h={20} key="i"><P d="M6 1v13l4 5 4-5V1M6 14h8M10 2v11" /></Svg>],
  ["05 Beispiel Ausführungsplanung", <Svg w={22} h={18} key="i"><P d="M1 1h20v16H1z" w={2} /><P d="M5 5h12v8H5zM9 8h4v2H9z" /></Svg>],
  ["Keine Überschreibungen", <Svg w={22} h={20} key="i"><P d="M9 4H2v10h6M8 4c1-4 9-4 10 1M15 3l3 3 3-3M11 8h9v10h-9z" /><S d="M11 11h9v7h-9z" c="#7d8588" /></Svg>],
  ["00 Reiner Neubau", <Svg w={22} h={20} key="i"><P d="M1 17L9 2l9 11v5H7" c={mute} /><P d="M9 2l10 14v3h-8v-6M12 19v-4h3v4" /></Svg>],
  ["Individuell", <Svg w={22} h={20} key="i"><P d="M1 2h20M3 0v5M19 0v5M3 8h16v11H3zM3 11h16" /></Svg>],
];

const track1 = [
  ["Abstand", "1,30", <P d="M2 12L13 2M8 2h5v5M2 7v5h5" key="k" />, { $bold: true }],
  ["Winkel (W)", "150,0000°", <P d="M14 1L2 7l12 6M11 2c3 3 3 8 0 11" key="k" />, {}],
  ["Komplettlänge", "3,38", <P d="M2 12L13 2M8 2h5v5M2 7v5h5" key="k" />, { $it: true }],
  ["Höhe", "2,67", <P d="M8 1v12M5 4l3-3 3 3M5 10l3 3 3-3" key="k" />, { $it: true }],
];
const track2 = [
  ["Auftritt", "0,26", <P d="M4 3h9M4 1v4M13 1v4M4 8v5h9" key="k" />, { arrow: true, lock: true }],
  ["Steigungshöhe", "0,19", <P d="M2 3v8M0 4l2-3 2 3M7 4v8h8V5" key="k" />, { arrow: true }],
  ["Anzahl der Setzstufen", "14 / 16", <P d="M1 9h4v4H1zM6 5h4v4H6zM11 1h4v4h-4z" key="k" />, { arrow: true }],
  ["2S + A", "0,64", <P d="M11 2C6 0 5 4 8 6s4 4 1 3-4-3-1-4M5 12c5 2 6-2 3-4" key="k" />, { $it: true }],
];
const Track = ({ row: [label, value, icon, o] }) => (
  <TrackRow $bold={o.$bold} $it={o.$it}>
    <Svg w={16} h={14} color="#1a4fc8">{icon}</Svg>
    <dt>{label}</dt><dd>{value}</dd>
    <span>{o.lock && <Svg w={16} h={18} color="#1a4fc8"><P d="M2 8h12v4c0 6-12 6-12 0zM5 8V5c0-5 6-5 6 0v3M8 10v3" /></Svg>}</span>
    {o.arrow && <Right c="#1a4fc8" s={6} />}
  </TrackRow>
);

const riser = (extra, d) => <Svg w={28} h={28}><P d={d} w={1.800} />{extra}</Svg>;
const planBlock = (d) => <Svg w={26} h={26}><P d="M2 2h22M18 2v13M22 2v13h-8M2 2v23M14 15v10M2 18h12M2 22h12" w={1.700} />{d && <P d={d} w={1.700} />}</Svg>;

const floatTop = [
  <Svg w={32} h={20} key="0"><P d="M3 2h27v16H3zM8 2v16M13 2v16M17 2v16M21 2v16M26 2v16M1 10h30" w={1.700} /></Svg>,
  <Svg w={32} h={20} key="1"><P d="M1 2h30v16h-9v-4H11v4H1z" /><P d="M7 17V8h18v9" c={mute} /></Svg>,
  <Svg w={32} h={20} key="2"><P d="M1 2h30v16h-9v-4H11v4H1zM1 2l10 12M31 2L21 14M16 2v12M1 10h7M24 10h7" /></Svg>,
  <Svg w={32} h={20} key="3"><P d="M1 2h30v16h-9v-4H11v4H1zM1 2l11 12M9 2l5 12M16 2v12M23 2l-5 12M31 2L20 14M1 10h7M24 10h7" /></Svg>,
];
const pen = "M18 14l2-5 8-8q3-1 3 2l-7 8z";
const floatLow = [
  <Svg w={32} h={32} key="0"><P d={pen} /><P d="M6 24L18 14" c={mute} /><P d="M4 25v5" w={3} /></Svg>,
  <Svg w={32} h={32} key="1"><P d={pen} /><P d="M3 22C3 16 8 12 16 12" c={mute} /><P d="M3 22v8" w={2.500} /></Svg>,
  <Svg w={32} h={32} key="2"><P d={pen} /><P d="M4 20c1-5 6-8 12-8" c={mute} /><P d="M4 20v10" w={2.500} /><path d="M4 18L12 4" strokeDasharray="3 3" /><P d="M13 1v6M10 4h6" /></Svg>,
  <Svg w={32} h={32} key="3"><P d={pen} /><P d="M17 8C2 10-1 20 7 28" c={mute} /><P d="M2 30h9" w={3} /><P d="M9 6v6M6 9h6" /></Svg>,
  <Svg w={32} h={32} key="4"><P d={pen} /><P d="M22 8C4 2-5 18 6 28" c={mute} /><P d="M2 30h9" w={3} /><P d="M11 15v6M8 18h6" /></Svg>,
];

export default function App() {
  return (
    <Shell>
      <Global />
      <TitleBar>
        <Svg w={18} h={20}><S d="M5 0h9l4 20H0z" c="#3a62b5" /></Svg>
        TREPPE_1 - ARCHICAD 23
      </TitleBar>
      <MenuBar>{menus.map((m) => <button key={m}>{m}</button>)}</MenuBar>

      <Toolbar>
        <ToolBtn aria-label="Sichern">{tool.save}</ToolBtn>
        <ToolSep />
        <ToolBtn aria-label="Widerrufen">{tool.undo}</ToolBtn>
        <ToolBtn aria-label="Wiederholen">{tool.redo}</ToolBtn>
        <ToolSep />
        {["find", "pick", "inject", "edit"].map((k) => <ToolBtn key={k} aria-label={k}>{tool[k]}</ToolBtn>)}
        <ToolSep />
        <ToolBtn aria-label="Kreuz">{tool.cross}</ToolBtn>
        <Split on label="Hilfslinien" icon={tool.square} />
        <Split on label="Fang" icon={tool.snap} />
        <Split on label="Koordinaten" icon={tool.coord} />
        <Split label="Raster" icon={tool.grid} />
        {["plane", "wallp", "planeEdit"].map((k) => <ToolBtn key={k} aria-label={k}>{tool[k]}</ToolBtn>)}
        <Split label="Stempel" icon={tool.stamp} muted />
        <ToolBtn aria-label="Lineal">{tool.ruler}</ToolBtn>
        <ToolBtn aria-label="Gruppe">{tool.group}</ToolBtn>
        <ToolSep />
        {["scissors", "axe", "raise", "corner", "fillet", "resize", "house"].map((k) => <ToolBtn key={k} aria-label={k}>{tool[k]}</ToolBtn>)}
        <ToolSep />
        {["gapW", "gapD"].map((k) => <ToolBtn key={k} aria-label={k}>{tool[k]}</ToolBtn>)}
        <ToolSep />
        {["star", "copyl", "flag", "flagl", "cloud", "view", "info", "brush", "clip"].map((k) => <ToolBtn key={k} aria-label={k}>{tool[k]}</ToolBtn>)}
        <ToolSep />
        <Split label="Schnittebene" icon={tool.cube} muted />
        <Split label="Norden" icon={tool.compass} />
      </Toolbar>

      <InfoBar>
        <Panel $pl={6}>
          <Grip />
          <GroupLabel>Grundeinstellung</GroupLabel>
          <Box $w={73} aria-label="Treppe Einstellungen">
            <Svg w={44} h={30}>{pal.treppen}</Svg><BoxDivider /><Down c="#333" />
          </Box>
        </Panel>
        <Panel>
          <Box $grow $justify="flex-start" $w={262}>
            <Svg w={24} h={16}><P d="M1 8C6 0 18 0 23 8 18 16 6 16 1 8z" /><circle cx="12" cy="8" r="5" /><circle cx="12" cy="8" r="2" /></Svg>
            <Grow>40 Treppe</Grow><Right />
          </Box>
        </Panel>
        <Panel>
          <Box $kind="off" aria-label="Treppenverlauf"><Svg w={38} h={30} color={mute}><P d="M1 28h7v-6h8v-6h8v-6h9M6 12L20 2M13 2h7v6" /></Svg><Right c={mute} s={6} /></Box>
          <Grow />
          <Box aria-label="Geländer links"><Svg w={34} h={34}><P d="M14 11l16 3-6 17-12 2zM15 15l13 3M14 19l13 3M13 23l12 3M12 28l12 2" c={mute} /><P d="M2 30l3-16L16 1v15M5 14v12" w={1.800} /></Svg></Box>
          <Box aria-label="Geländer rechts"><Svg w={34} h={34}><P d="M12 13l13-3-4 21H5zM11 17l12-2M9 21l13-1M8 25l13-1M6 29l14-1" c={mute} /><P d="M30 4v13l-8 13M19 16L30 4M22 13v16" w={1.800} /></Svg></Box>
        </Panel>
        <Panel $gap={12}>
          <Box aria-label="Verankerung"><Svg w={30} h={20}><P d="M1 1h18M4 1v14M10 1v14M16 1v14M1 15h26M23 11l5 4-5 4" w={2} /></Svg><Right /></Box>
          <Svg w={42} h={20}><P d="M1 2h18M1 11h28M4 1v14M9 1v14M14 1v14M18 1v14M25 7l5 4-5 4" w={2} /><S d="M34 2h7l-3.500 5zM34 18h7l-3.500-5z" /></Svg>
          <Field aria-label="Versatz" defaultValue="0,00" />
        </Panel>
        <Panel $gap={0} $pl={6}>
          <Box $kind="on" aria-label="Podest">{planBlock()}</Box>
          <Box $kind="plain" aria-label="Zweiteilig">{planBlock("M3 3l15 12")}</Box>
          <Box $kind="plain" aria-label="Gewendelt">{planBlock("M8 3l10 12M3 10l12 6M14 3l5 12")}</Box>
          <Grow />
          <Box aria-label="Wendelung wählen"><Svg w={32} h={26}><P d="M2 2h22M18 2v10M22 2v10M2 2v23M14 15v10M2 18h12M2 22h12" w={1.700} /><ListBadge x={17} y={13} /></Svg><Right s={7} /></Box>
        </Panel>
        <Panel $gap={2} $pl={6}>
          <Box $kind="plain" aria-label="Antritt unten">{riser(null, "M2 17h7v-5h9V7h8V2M2 17v7h6L26 14")}</Box>
          <Box $kind="on" aria-label="Antritt flach">{riser(<P d="M1 16h11M1 25h22" c={mute} />, "M26 4v6h-6v6h-7v6h7l6-5")}</Box>
          <Box $kind="plain" aria-label="Austritt oben">{riser(null, "M2 12h6V8h8V3h10v7L4 26")}</Box>
          <Box $kind="on" aria-label="Austritt flach">{riser(<P d="M15 3h11M19 12h8" c={mute} />, "M2 15h7v-5h6V4M18 12l-14 12M18 4v8")}</Box>
        </Panel>
        <Panel $pl={18} $gap={12}>
          <Svg w={42} h={18}><P d="M1 2h27M1 15h27M4 2v13M9 2v13M14 2v13M19 2v13M24 2v13M37 4v10" w={2} /><path d="M28 2h8M28 15h8" strokeDasharray="2 3" /><S d="M33.500 6l4-5 4 5zM33.500 11l4 5 4-5z" /></Svg>
          <Field aria-label="Laufbreite" defaultValue="1,03" />
        </Panel>
        <Panel $pl={12} $gap={9}>
          <Svg w={50} h={38}><P d="M2 2h24l3 5H5zM5 9h24l2 5H7zM7 16h24l2 4H9zM9 22h24l1 4H11z" w={1.800} /><P d="M45 4v20M45 28v6" /><S d="M41 7l4-5 4 5zM41 21l4 5 4-5zM42 29l3-3 3 3zM42 33l3 3 3-3z" /><S d="M3 29h22l13 8H10z" c="#90989b" /></Svg>
          <Stack>
            <Field aria-label="Höhe" defaultValue="3,06" />
            <Field aria-label="Höhe zum Ursprungsgeschoss" defaultValue="0,00" />
          </Stack>
          <MiniBtn aria-label="Mehr"><Right s={7} /></MiniBtn>
        </Panel>
        <Panel $pl={20}>
          <Stack>
            <Line><Svg w={34} h={20}><S d="M2 1h26l5 6H6z" c="#a0a6a8" /><rect x="6" y="8" width="13" height="8" rx="3" /><rect x="12" y="11" width="13" height="8" rx="3" /></Svg><Grow>Nicht verknüpft</Grow><MiniBtn aria-label="Verknüpfung"><Right s={7} /></MiniBtn></Line>
            <Line><Svg w={34} h={20}><S d="M2 12h26l5 7H6z" c="#a0a6a8" /><P d="M16 1l-7 7h3v7h9V8h3z" f="#f0f0f0" /></Svg><Grow>0. EG (Aktuell)</Grow><MiniBtn aria-label="Geschoss"><Right s={7} /></MiniBtn></Line>
          </Stack>
        </Panel>
        <Panel $gap={4}>
          <Field $h={35} aria-label="ID" defaultValue="Treppe-011" />
          <Box $w={59} aria-label="Eigenschaften"><Svg w={20} h={24}><rect x="1" y="1" width="18" height="22" rx="2" /><P d="M4 6h8M4 9h12M4 12h7M4 15h12M4 18h9" /></Svg><Right s={7} /></Box>
        </Panel>
        <Panel $pl={12} $gap={8}>
          <Svg w={22} h={22}><circle cx="12" cy="9" r="8.500" /><P d="M1 21L16 4M7 14h7M6 8v6M11 10V5M11 10h5" /></Svg>
          <Grow>Treppe</Grow>
          <Box $w={59} aria-label="Klassifizierung"><Svg w={24} h={24}><P d="M8 18c-6 1-8-4-6-7-1-3 1-5 3-5 1-7 13-7 14 0 4 1 4 6 2 8 1 3-3 5-6 4zM12 23V8M12 15l4-3M8 23h8M12 12l-3-2" /></Svg><Right s={7} /></Box>
        </Panel>
        <Panel $pl={20}>
          <Stack>
            <Line><Svg w={36} h={22}><P d="M1 20h2v-6h8V8h7V2h8M25 11h10M24 16h10M28 8l-2 12M33 8l-2 12" /></Svg></Line>
            <Line><Svg w={36} h={22}><P d="M6 3v8M9 14h20v4H9zM27 14V2h6M31 5v13M11 18v4" /><S d="M2 6l4-6 4 6zM2 9l4 5 4-5z" /></Svg></Line>
          </Stack>
        </Panel>
      </InfoBar>
      <ScrollTrack><ScrollThumb /></ScrollTrack>

      <Work>
        <Palette>
          <PaletteGrip />
          {groups.map((g, i) => (
            <React.Fragment key={i}>
              {g.head && <PaletteHead><Svg w={11} h={7}><S d="M0 1h11l-5.500 6z" c="#333" /></Svg>{g.head}</PaletteHead>}
              <PaletteList $first={!g.head}>
                {g.items.map(([label, k]) => (
                  <li key={label}>
                    <PaletteRow $on={k === "treppen"}><Svg w={44} h={32}>{pal[k]}</Svg>{label}</PaletteRow>
                  </li>
                ))}
              </PaletteList>
            </React.Fragment>
          ))}
          <PaletteHead><Svg w={11} h={11}><S d="M2 0l7 5.500L2 11z" c="#333" /></Svg>Sonstiges</PaletteHead>
        </Palette>

        <Content>
          <Tabs>
            <TabGrid aria-label="Übersicht"><Svg w={28} h={22}><P d="M1 1h10v8H1zM16 1h10v8H16zM1 13h10v8H1zM16 13h10v8H16z" w={1.800} /></Svg></TabGrid>
            <Tab $on>
              <TabName><Svg w={28} h={22}><P d="M1 1h11v8h14v12H1zM4 1v5l5-5" /></Svg>[0. EG]</TabName>
              <button aria-label="Schließen"><Svg w={12} h={12} color="#000"><P d="M2 2l8 8M10 2l-8 8" w={3} /></Svg></button>
            </Tab>
            <Tab>
              <TabName><Svg w={28} h={24}><P d="M3 4l14-3 6 4v15l-6 3-14-3zM17 1v22M3 4v16" f="#fff" /></Svg>[3D / Alle]</TabName>
            </Tab>
            <TabEnd aria-label="Ansichten"><Svg w={44} h={24} color={blue}><P d="M1 4h5v3H1zM4 7v14M4 12h5M4 16h5M4 21h5M13 22V11l8-9 9 9v11zM24 8l4-6 12 9v11H30M11 12l10-10" w={1.800} /></Svg></TabEnd>
          </Tabs>
          <Canvas>
            <Drawing />
            <Ear $side="top"><Svg w={36} h={4}><path d="M0 2h36" stroke="#f9a45c" strokeWidth="3" strokeLinecap="butt" strokeDasharray="7 3" /></Svg></Ear>
            <Ear $side="bottom"><Svg w={36} h={4}><path d="M0 2h36" stroke="#f9a45c" strokeWidth="3" strokeLinecap="butt" strokeDasharray="7 3" /></Svg></Ear>
            <Ear $side="left" $v><Svg w={4} h={40}><path d="M2 0v40" stroke="#f9a45c" strokeWidth="2" strokeLinecap="butt" strokeDasharray="7 4" /></Svg></Ear>
            <Tracker>
              {track1.map((r) => <Track key={r[0]} row={r} />)}
              <TrackRule />
              {track2.map((r) => <Track key={r[0]} row={r} />)}
            </Tracker>
          </Canvas>
          <StatusBar>
            <ZoomSet>
              <button aria-label="Zurück">{orbit(false)}</button>
              <button aria-label="Vor">{orbit(true, "#b9bcbe")}</button>
              <button aria-label="Vergrößern">{magnify(<P d="M11 7v8M7 11h8" />)}</button>
            </ZoomSet>
            {statusItems.map(([label, icon, off]) => (
              <StatusCell key={label}>
                <StatusBtn $off={off}>{icon}<StatusLabel>{label}</StatusLabel><Right s={7} c={off ? "#aaa" : "#333"} /></StatusBtn>
              </StatusCell>
            ))}
          </StatusBar>
        </Content>
      </Work>
      <Message>Nächsten Eckpunkt der Treppen-Referenzlinie eingeben.</Message>

      <FloatBox>
        <Grip />
        <FloatGrid>
          {floatTop.map((s, i) => <FloatBtn key={i} $on={i === 0} aria-label={"Stufenform " + (i + 1)}>{s}</FloatBtn>)}
          <span />
          {floatLow.map((s, i) => <FloatBtn key={i} $on={i === 0} aria-label={"Segment " + (i + 1)}>{s}</FloatBtn>)}
        </FloatGrid>
      </FloatBox>
    </Shell>
  );
}
